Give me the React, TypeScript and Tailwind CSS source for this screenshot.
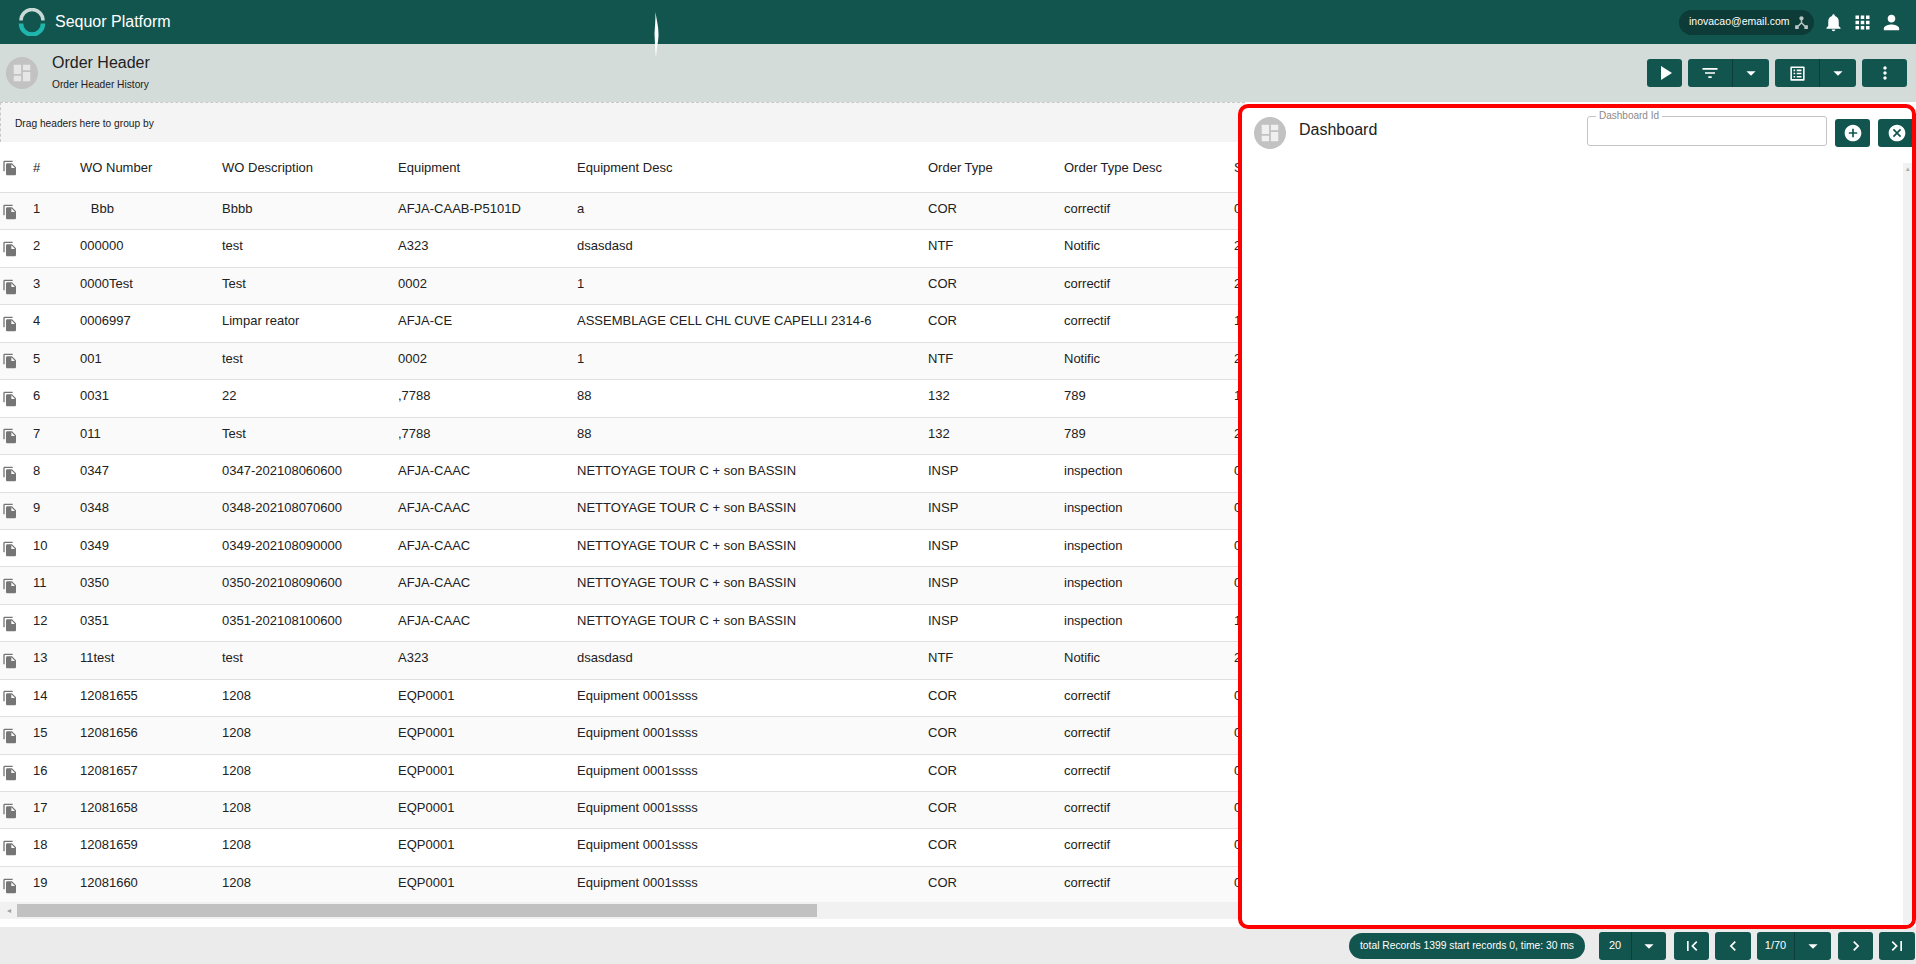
import React from 'react';
import {
  MdAddCircle,
  MdApps,
  MdArrowDropDown,
  MdCancel,
  MdChevronLeft,
  MdChevronRight,
  MdDashboard,
  MdDeviceHub,
  MdFileCopy,
  MdFilterList,
  MdFirstPage,
  MdLastPage,
  MdListAlt,
  MdMoreVert,
  MdNotifications,
  MdPerson,
  MdPlayArrow,
} from 'react-icons/md';

const ROWS = [
  ['   Bbb', 'Bbbb', 'AFJA-CAAB-P5101D', 'a', 'COR', 'correctif', '0'],
  ['000000', 'test', 'A323', 'dsasdasd', 'NTF', 'Notific', '2'],
  ['0000Test', 'Test', '0002', '1', 'COR', 'correctif', '2'],
  ['0006997', 'Limpar reator', 'AFJA-CE', 'ASSEMBLAGE CELL CHL CUVE CAPELLI 2314-6', 'COR', 'correctif', '1'],
  ['001', 'test', '0002', '1', 'NTF', 'Notific', '2'],
  ['0031', '22', ',7788', '88', '132', '789', '1'],
  ['011', 'Test', ',7788', '88', '132', '789', '2'],
  ['0347', '0347-202108060600', 'AFJA-CAAC', 'NETTOYAGE TOUR C + son BASSIN', 'INSP', 'inspection', '0'],
  ['0348', '0348-202108070600', 'AFJA-CAAC', 'NETTOYAGE TOUR C + son BASSIN', 'INSP', 'inspection', '0'],
  ['0349', '0349-202108090000', 'AFJA-CAAC', 'NETTOYAGE TOUR C + son BASSIN', 'INSP', 'inspection', '0'],
  ['0350', '0350-202108090600', 'AFJA-CAAC', 'NETTOYAGE TOUR C + son BASSIN', 'INSP', 'inspection', '0'],
  ['0351', '0351-202108100600', 'AFJA-CAAC', 'NETTOYAGE TOUR C + son BASSIN', 'INSP', 'inspection', '1'],
  ['11test', 'test', 'A323', 'dsasdasd', 'NTF', 'Notific', '2'],
  ['12081655', '1208', 'EQP0001', 'Equipment 0001ssss', 'COR', 'correctif', '0'],
  ['12081656', '1208', 'EQP0001', 'Equipment 0001ssss', 'COR', 'correctif', '0'],
  ['12081657', '1208', 'EQP0001', 'Equipment 0001ssss', 'COR', 'correctif', '0'],
  ['12081658', '1208', 'EQP0001', 'Equipment 0001ssss', 'COR', 'correctif', '0'],
  ['12081659', '1208', 'EQP0001', 'Equipment 0001ssss', 'COR', 'correctif', '0'],
  ['12081660', '1208', 'EQP0001', 'Equipment 0001ssss', 'COR', 'correctif', '0'],
];

const HEADERS = ['WO Number', 'WO Description', 'Equipment', 'Equipment Desc', 'Order Type', 'Order Type Desc', 'S'];

// column widths of the grid, copy icon and # first
const GRID = 'grid grid-cols-[33px_47px_142px_176px_179px_351px_136px_170px_100px] items-center w-[1334px]';

const Logo = () => (
  <svg width="28" height="28" viewBox="0 0 28 28" fill="none">
    <path d="M3 12.5 A11 11 0 0 1 25 12.5" stroke="#c9d9d6" strokeWidth="3.5" />
    <path d="M3 15.5 A11 11 0 0 0 25 15.5" stroke="#1fb6ae" strokeWidth="4.5" />
  </svg>
);

const TealButton = ({ className, children }: { className: string; children: React.ReactNode }) => (
  <div className={`flex items-center justify-center bg-[#12554f] text-white rounded-[3px] h-[28px] ${className}`}>
    {children}
  </div>
);

const SplitButton = ({ children, left, right }: { children: React.ReactNode; left: string; right: string }) => (
  <div className="flex bg-[#12554f] text-white rounded-[3px] h-[28px]">
    <div className={`flex items-center justify-center border-r border-[#0c3f3b] ${left}`}>{children}</div>
    <div className={`flex items-center justify-center ${right}`}>
      <MdArrowDropDown size={22} />
    </div>
  </div>
);

const App: React.FC = () => {
  return (
    <div className="relative flex flex-col h-screen w-full overflow-hidden bg-white font-['Liberation_Sans',Arial,sans-serif] text-[#212121]">
      <header className="flex items-center justify-between h-[44px] shrink-0 bg-[#12554f] text-white pl-[18px] pr-[13px]">
        <div className="flex items-center gap-[9px]">
          <Logo />
          <span className="text-[16px]">Sequor Platform</span>
        </div>
        <div className="flex items-center">
          <div className="flex items-center justify-between w-[135px] h-[25px] rounded-full bg-[#0c3b38] pl-[10px] pr-[4px] text-[10.5px]">
            <span>inovacao@email.com</span>
            <MdDeviceHub size={17} className="text-[#b9c7c4]" />
          </div>
          <MdNotifications size={21} className="ml-[9px]" />
          <MdApps size={21} className="ml-[8px]" />
          <MdPerson size={23} className="ml-[7px]" />
        </div>
      </header>

      <section className="flex items-center justify-between h-[58px] shrink-0 bg-[#d4dcd9] pl-[6px] pr-[9px]">
        <div className="flex items-center gap-[14px]">
          <div className="flex items-center justify-center w-[32px] h-[32px] rounded-full bg-[#c2c2c2]">
            <MdDashboard size={22} className="text-[#e6e6e6]" />
          </div>
          <div className="flex flex-col -mt-[2px]">
            <span className="text-[16px] leading-[20px]">Order Header</span>
            <span className="text-[10.2px] leading-[14px] mt-[5px]">Order Header History</span>
          </div>
        </div>
        <div className="flex items-center gap-[6px]">
          <TealButton className="w-[35px]">
            <MdPlayArrow size={24} />
          </TealButton>
          <SplitButton left="w-[45px]" right="w-[36px]">
            <MdFilterList size={20} />
          </SplitButton>
          <SplitButton left="w-[45px]" right="w-[36px]">
            <MdListAlt size={19} />
          </SplitButton>
          <TealButton className="w-[45px]">
            <MdMoreVert size={20} />
          </TealButton>
        </div>
      </section>

      <div className="flex items-center w-[1245px] h-[40px] shrink-0 bg-[#f4f4f4] border-t border-l border-dashed border-[#c8c8c8] pl-[14px] pt-[2px] text-[10.2px]">
        Drag headers here to group by
      </div>

      <div className="flex-1 overflow-hidden text-[13px]">
        <div className={`${GRID} h-[51px] pt-[2px] border-b border-[#e0e0e0]`}>
          <MdFileCopy size={16} className="ml-[2px] text-[#757575]" />
          <span>#</span>
          {HEADERS.map((h) => (
            <span key={h} className="whitespace-nowrap">{h}</span>
          ))}
        </div>
        {ROWS.map((row, i) => (
          <div key={i} className={`${GRID} h-[37.45px] pb-[5px] border-b border-[#e0e0e0] last:border-b-0 ${i % 2 === 0 ? 'bg-[#fafafa]' : 'bg-white'}`}>
            <MdFileCopy size={16} className="ml-[2px] mt-[6px] text-[#757575]" />
            <span>{i + 1}</span>
            {row.map((cell, j) => (
              <span key={j} className="whitespace-pre">{cell}</span>
            ))}
          </div>
        ))}
        <div className="flex items-center h-[17px] bg-[#f1f1f1] -mt-[2px]">
          <div className="flex items-center justify-center w-[17px] text-[#a0a0a0] text-[8px]">◂</div>
          <div className="w-[800px] h-[13px] bg-[#c1c1c1]" />
        </div>
      </div>

      <footer className="flex items-center justify-end gap-[6px] h-[37px] shrink-0 bg-[#ebebeb] pr-px text-white">
        <div className="flex items-center justify-center w-[236px] h-[26px] mr-[8px] rounded-full bg-[#12554f] text-[10.3px]">
          total Records 1399 start records 0, time: 30 ms
        </div>
        <SplitButton left="w-[33px] text-[11px]" right="w-[34px]">20</SplitButton>
        <TealButton className="w-[35px] ml-[2px]">
          <MdFirstPage size={20} />
        </TealButton>
        <TealButton className="w-[36px]">
          <MdChevronLeft size={20} />
        </TealButton>
        <SplitButton left="w-[38px] text-[11px]" right="w-[36px]">1/70</SplitButton>
        <TealButton className="w-[35px] ml-px">
          <MdChevronRight size={20} />
        </TealButton>
        <TealButton className="w-[36px]">
          <MdLastPage size={20} />
        </TealButton>
      </footer>

      {/* dashboard panel lies over the grid */}
      <aside className="absolute left-[1238px] right-0 top-[104px] h-[825px] bg-white border-[4px] border-[#ff0000] rounded-[10px] overflow-hidden">
        <div className="flex items-start pt-[7px] pl-[12px]">
          <div className="flex items-center justify-center shrink-0 w-[32px] h-[32px] mt-[2px] rounded-full bg-[#c2c2c2]">
            <MdDashboard size={22} className="text-[#f0f0f0]" />
          </div>
          <span className="ml-[13px] mt-[3px] text-[16px] w-[288px] shrink-0">Dashboard</span>
          <fieldset className="w-[240px] h-[35px] shrink-0 -mt-[4px] border border-[#c4c4c4] rounded-[3px] pl-[8px]">
            <legend className="px-[3px] text-[10px] leading-[10px] text-[#8a8a8a]">Dashboard Id</legend>
          </fieldset>
          <TealButton className="w-[35px] shrink-0 ml-[8px] mt-[4px]">
            <MdAddCircle size={20} />
          </TealButton>
          <TealButton className="w-[38px] shrink-0 ml-[8px] mt-[4px]">
            <MdCancel size={20} />
          </TealButton>
        </div>
        <div className="absolute right-0 top-[55px] bottom-0 w-[9px] bg-[#f1f1f1] flex justify-center text-[7px] leading-[12px] text-[#a8a8a8]">▴</div>
      </aside>

      {/* thin white sliver crossing the header */}
      <svg className="absolute left-[654px] top-[12px]" width="6" height="46" viewBox="0 0 6 46">
        <path d="M1.5 0 C2.5 8 4.5 14 4.5 22 C4.5 30 2.5 36 2 46 C1 36 1 30 0.5 22 C1 14 1.5 8 1.5 0 Z" fill="#ffffff" />
      </svg>
    </div>
  );
};

export default App;
